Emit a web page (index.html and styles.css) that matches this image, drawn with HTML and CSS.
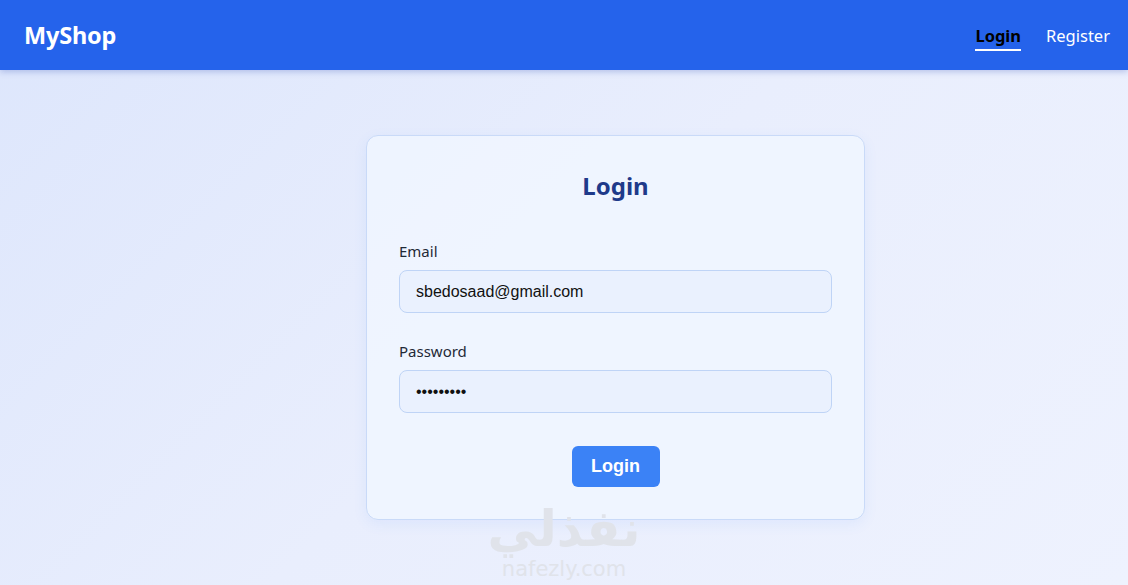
FILE: index.html
```html
<!DOCTYPE html>
<html lang="en">
  <head>
    <meta charset="UTF-8" />
    <meta name="viewport" content="width=device-width, initial-scale=1.0" />
    <title>MyShop - Login</title>
    <link rel="stylesheet" href="styles.css">
  </head>
  <body>
    <nav class="navbar">
      <a href="#" class="brand">MyShop</a>
      <div class="nav-links">
        <a href="#" class="nav-link active">Login</a>
        <a href="#" class="nav-link">Register</a>
      </div>
    </nav>

    <main class="page">
      <form class="card" onsubmit="return false;">
        <h2 class="card-title">Login</h2>

        <div class="field">
          <label for="email">Email</label>
          <input type="email" id="email" value="sbedosaad@gmail.com" />
        </div>

        <div class="field">
          <label for="password">Password</label>
          <input type="password" id="password" value="123456789" />
        </div>

        <div class="actions">
          <button type="submit">Login</button>
        </div>
      </form>
    </main>

    <div class="watermark">
      <span class="wm-ar">نفذلي</span>
      <span class="wm-en">nafezly.com</span>
    </div>
  </body>
</html>
```

FILE: styles.css
```css
* {
  box-sizing: border-box;
}
html,
body {
  height: 100%;
}
body {
  margin: 0;
  font-family: "Noto Sans", "Open Sans", sans-serif;
  background: linear-gradient(135deg, #dde6fc 0%, #e9eefd 50%, #eef2fe 100%);
  overflow: hidden;
}
.navbar {
  height: 70px;
  padding: 0 18px 0 24px;
  display: flex;
  align-items: center;
  justify-content: space-between;
  background-color: #2563eb;
  box-shadow: 0 2px 6px rgba(30, 64, 175, 0.25);
}
.brand {
  color: #ffffff;
  font-size: 23.5px;
  font-weight: 700;
  text-decoration: none;
  letter-spacing: -0.2px;
}
.nav-links {
  display: flex;
  gap: 25px;
  align-items: center;
}
.nav-link {
  color: #ffffff;
  font-size: 16.5px;
  text-decoration: none;
  line-height: 24px;
  border-bottom: 2px solid transparent;
  padding-top: 4px;
  padding-bottom: 1px;
}
.nav-link.active {
  color: #000000;
  font-weight: 700;
  border-bottom-color: #ffffff;
}
.page {
  display: flex;
  justify-content: center;
  padding: 65px 0 0 103px;
}
.card {
  width: 499px;
  padding: 32px;
  background-color: rgba(240, 246, 255, 0.85);
  border: 1px solid #c9daf8;
  border-radius: 12px;
  box-shadow: 0 4px 14px rgba(59, 130, 246, 0.08);
}
.card-title {
  margin: 0 0 36px;
  text-align: center;
  font-size: 24px;
  line-height: 36px;
  font-weight: 700;
  color: #1e3a8a;
}
.field {
  margin-bottom: 27px;
}
.field label {
  display: block;
  margin-bottom: 8px;
  font-size: 15px;
  line-height: 22px;
  color: #1f2937;
}
.field input {
  width: 100%;
  height: 43px;
  padding: 0 16px;
  font-family: "Liberation Sans", Arial, sans-serif;
  font-size: 16px;
  color: #111111;
  background-color: #eaf1fe;
  border: 1px solid #bfd4f6;
  border-radius: 8px;
  outline: none;
}
.actions {
  display: flex;
  justify-content: center;
  padding-top: 6px;
}
button {
  width: 88px;
  height: 41px;
  font-family: "Liberation Sans", Arial, sans-serif;
  font-size: 18px;
  font-weight: 700;
  color: #ffffff;
  background-color: #3b82f6;
  border: none;
  border-radius: 6px;
  cursor: pointer;
}
button:hover {
  background-color: #2563eb;
}
.watermark {
  position: absolute;
  left: 489px;
  top: 500px;
  width: 150px;
  display: flex;
  flex-direction: column;
  align-items: center;
  color: #e0e3ea;
  pointer-events: none;
}
.wm-ar {
  font-family: "DejaVu Sans", sans-serif;
  font-size: 50px;
  font-weight: 700;
  line-height: 58px;
}
.wm-en {
  font-family: "DejaVu Sans", sans-serif;
  font-size: 21px;
  line-height: 22px;
}
```
